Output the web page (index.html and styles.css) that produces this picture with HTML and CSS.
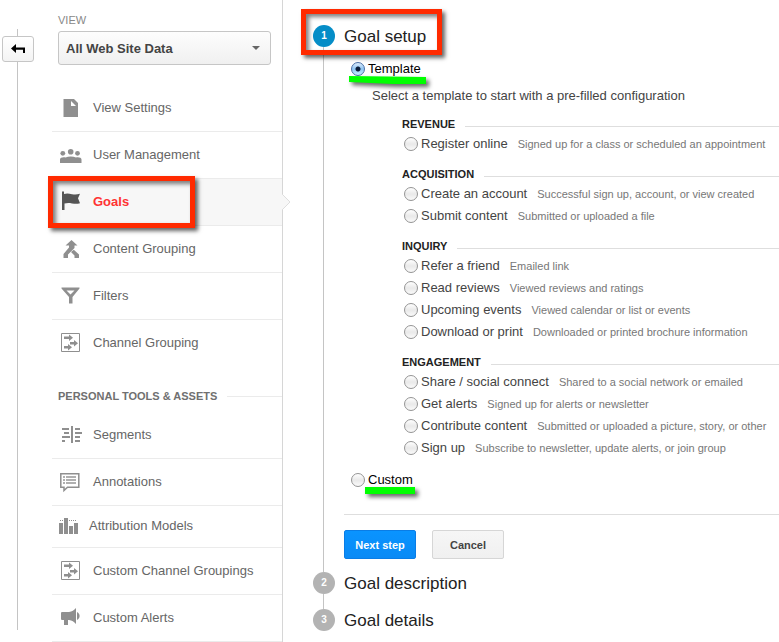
FILE: index.html
```html
<!DOCTYPE html>
<html lang="en">
<head>
  <meta charset="UTF-8">
  <title>Goal setup</title>
  <link rel="stylesheet" href="styles.css">
</head>
<body>
  <div class="page">
    <div class="rail">
      <span class="rail-line rail-top"></span>
      <button class="back" type="button" aria-label="Back">
        <svg width="16" height="12" viewBox="0 0 16 12"><path d="M1 5.500L6 1v3.500h9V10h-2V6.700H6V10z"/></svg>
      </button>
      <span class="rail-line"></span>
    </div>

    <nav class="nav">
      <label class="view-label" for="view">VIEW</label>
      <div class="view-box">
        <select id="view" class="view-select">
          <option>All Web Site Data</option>
        </select>
        <svg class="caret" width="8" height="4" viewBox="0 0 8 4"><path d="M0 0h8L4 4z"/></svg>
      </div>

      <ul class="menu">
        <li><a href="#">
          <svg class="icon" viewBox="0 0 24 24"><path d="M5.500 3H16l4 4v14H5.500z"/><path class="cut" d="M13 5v5h5z"/></svg>
          View Settings</a></li>
        <li><a href="#">
          <svg class="icon" viewBox="0 0 24 24"><circle cx="12.700" cy="8.800" r="2.800"/><circle cx="4.800" cy="10.300" r="2.400"/><circle cx="19.500" cy="10.300" r="2.400"/><path d="M2 20v-3.500c0-2 3-2.500 5.500-2 3-1.200 7.500-1.200 10.500 0 2.500-.5 5.500 0 5.500 2V20z"/></svg>
          User Management</a></li>
        <li class="active"><a href="#">
          <svg class="icon" viewBox="0 0 24 24"><path d="M4 1.500h2V4c3-1 5-.5 8 .2 3 .5 5 .4 8-.4l-2 4.500 2 5c-3 .8-5 .6-8 .1-3-.6-5-.6-7.500.2V20H4z"/></svg>
          Goals</a>
          <svg class="notch" width="9" height="16" viewBox="0 0 9 16"><path d="M0 0l8 8-8 8"/></svg>
          <span class="mark-box mark-goals"></span></li>
        <li><a href="#">
          <svg class="icon" viewBox="0 0 24 24"><path d="M13.500 3l6 5.500h-3V11l-6.500 6.500V21H5.500v-4L11 10.500v-2H7.500z"/><path d="M15.800 12.700l5.200 4.800V21h-4.500v-2.500L13 15z"/></svg>
          Content Grouping</a></li>
        <li><a href="#">
          <svg class="icon" viewBox="0 0 24 24"><path d="M3.500 3.500h18v1L14.500 13v6.500H11V13L3.500 4.500z"/><path class="cut" d="M8.500 6.500h8l-4 4z"/></svg>
          Filters</a></li>
        <li><a href="#">
          <svg class="icon" viewBox="0 0 24 24"><path class="line" d="M3.500 2.500h18v18h-18z"/><path d="M6 5.500h5V3.500l4 3.200-4 3.200V8H6zM12 11h4V9l4 3.200-4 3.200v-2h-4zM6 15h4v-2l4 3.200-4 3.200v-2H6z"/></svg>
          Channel Grouping</a></li>
      </ul>

      <h2 class="nav-heading">PERSONAL TOOLS &amp; ASSETS</h2>

      <ul class="menu tools">
        <li><a href="#">
          <svg class="icon" viewBox="0 0 24 24"><path d="M13 3h2v17h-2zM4 5h7v2H4zM6 9h5v2H6zM4 13h8v2H4zM4 17h3v2H4zM17 5h5v2h-5zM17 9h7v2h-7zM17 13h5v2h-5zM17 17h5v2h-5z"/></svg>
          Segments</a></li>
        <li><a href="#">
          <svg class="icon" viewBox="0 0 24 24"><path class="line bold" d="M2.800 3.800h18v13.500H9.500L6 20.500v-3.200H2.800z"/><path class="light" d="M5 6h2v2H5zM8 6h10v2H8zM5 9h2v2H5zM8 9h10v2H8zM5 12h2v2H5zM8 12h10v2H8z"/></svg>
          Annotations</a></li>
        <li class="short"><a href="#">
          <svg class="icon" viewBox="0 0 24 24"><path d="M1 8h4v11H1zM6 3h4v16H6zM11 11h4v8h-4zM16 8h4v11h-4z"/><path d="M2 5h1v1H2zM4 5h1v1H4zM11 5h1v1h-1zM13 5h1v1h-1zM15 5h1v1h-1zM17 5h1v1h-1z"/></svg>
          Attribution Models</a></li>
        <li><a href="#">
          <svg class="icon" viewBox="0 0 24 24"><path class="line" d="M3.500 2.500h18v18h-18z"/><path d="M6 5.500h5V3.500l4 3.200-4 3.200V8H6zM12 11h4V9l4 3.200-4 3.200v-2h-4zM6 15h4v-2l4 3.200-4 3.200v-2H6z"/></svg>
          Custom Channel Groupings</a></li>
        <li><a href="#">
          <svg class="icon" viewBox="0 0 24 24"><path d="M4 6h7c3-.3 5-1.600 7-4v16c-2-2.400-4-3.700-7-4h-1v5H6v-5H4c-1 0-1-1-1-1V7s0-1 1-1zM19 6c3.500 1.500 3.500 6.500 0 8z"/></svg>
          Custom Alerts</a></li>
      </ul>
    </nav>

    <main class="main">
      <section class="step current">
        <div class="marker"><span class="num">1</span></div>
        <form class="step-body">
          <h1 class="title">Goal setup<span class="mark-box mark-setup"></span></h1>

          <div class="choice choice-first">
            <input type="radio" name="type" id="template" checked>
            <label for="template">Template</label>
            <svg class="mark-line mark-template" width="84" height="16" viewBox="0 0 84 16"><path d="M0 0l77 1v7H44L0 6z"/></svg>
          </div>
          <p class="hint">Select a template to start with a pre-filled configuration</p>

          <div class="groups">
            <div class="group">
              <h3>REVENUE</h3>
              <div class="row"><input type="radio" name="goal" id="g1"><label for="g1">Register online</label><span>Signed up for a class or scheduled an appointment</span></div>
            </div>
            <div class="group">
              <h3>ACQUISITION</h3>
              <div class="row"><input type="radio" name="goal" id="g2"><label for="g2">Create an account</label><span>Successful sign up, account, or view created</span></div>
              <div class="row"><input type="radio" name="goal" id="g3"><label for="g3">Submit content</label><span>Submitted or uploaded a file</span></div>
            </div>
            <div class="group">
              <h3>INQUIRY</h3>
              <div class="row"><input type="radio" name="goal" id="g4"><label for="g4">Refer a friend</label><span>Emailed link</span></div>
              <div class="row"><input type="radio" name="goal" id="g5"><label for="g5">Read reviews</label><span>Viewed reviews and ratings</span></div>
              <div class="row"><input type="radio" name="goal" id="g6"><label for="g6">Upcoming events</label><span>Viewed calendar or list or events</span></div>
              <div class="row"><input type="radio" name="goal" id="g7"><label for="g7">Download or print</label><span>Downloaded or printed brochure information</span></div>
            </div>
            <div class="group">
              <h3>ENGAGEMENT</h3>
              <div class="row"><input type="radio" name="goal" id="g8"><label for="g8">Share / social connect</label><span>Shared to a social network or emailed</span></div>
              <div class="row"><input type="radio" name="goal" id="g9"><label for="g9">Get alerts</label><span>Signed up for alerts or newsletter</span></div>
              <div class="row"><input type="radio" name="goal" id="g10"><label for="g10">Contribute content</label><span>Submitted or uploaded a picture, story, or other</span></div>
              <div class="row"><input type="radio" name="goal" id="g11"><label for="g11">Sign up</label><span>Subscribe to newsletter, update alerts, or join group</span></div>
            </div>
          </div>

          <div class="choice">
            <input type="radio" name="type" id="custom">
            <label for="custom">Custom</label>
            <svg class="mark-line mark-custom" width="58" height="14" viewBox="0 0 58 14"><path d="M1 1h50v7H1z"/></svg>
          </div>

          <div class="buttons">
            <button class="btn primary" type="button">Next step</button>
            <button class="btn" type="button">Cancel</button>
          </div>
        </form>
      </section>

      <section class="step">
        <div class="marker"><span class="num">2</span></div>
        <h1 class="title">Goal description</h1>
      </section>
      <section class="step last">
        <div class="marker"><span class="num">3</span></div>
        <h1 class="title">Goal details</h1>
      </section>
    </main>
  </div>
</body>
</html>
```

FILE: styles.css
```css
body{
  margin: 0;
  background-color: #fff;
  font-family: "Liberation Sans", Arial, sans-serif;
  font-size: 13px;
  color: #444;
}
h1, h2, h3, p, ul{
  margin: 0;
  padding: 0;
}
.page{
  display: flex;
  min-height: 100vh;
  overflow: hidden;
}

/* left rail with the back button */
.rail{
  display: flex;
  flex-direction: column;
  width: 34px;
  margin-right: 18px;
  padding: 29px 0 12px 2px;
  box-sizing: border-box;
}
.rail-line{
  flex: 1;
  width: 1px;
  margin-left: 15px;
  background-color: #c4c4c4;
}
.rail-top{
  flex: none;
  height: 7px;
}
.back{
  display: flex;
  align-items: center;
  justify-content: center;
  width: 32px;
  height: 26px;
  padding: 0;
  border: 1px solid #c6c6c6;
  border-radius: 3px;
  background: linear-gradient(#fff, #f3f3f3);
}

/* navigation */
.nav{
  flex: none;
  width: 230px;
  padding-top: 12px;
  border-right: 1px solid #d6d6d6;
}
.view-label{
  display: block;
  padding-left: 6px;
  font-size: 11px;
  line-height: 16px;
  color: #888;
}
.view-box{
  position: relative;
  margin: 3px 11px 20px 6px;
}
.view-select{
  display: block;
  width: 100%;
  height: 34px;
  padding: 0 7px;
  border: 1px solid #c6c6c6;
  border-radius: 3px;
  background: linear-gradient(#fdfdfd, #f0f0f0);
  appearance: none;
  font-family: inherit;
  font-size: 13px;
  font-weight: bold;
  color: #444;
}
.caret{
  position: absolute;
  right: 11px;
  top: 15px;
  fill: #666;
}
.menu{
  list-style: none;
}
.menu li{
  position: relative;
  border-bottom: 1px solid #ebebeb;
}
.menu a{
  display: flex;
  align-items: center;
  gap: 11px;
  box-sizing: border-box;
  height: 46px;
  padding: 0 0 2px 6px;
  color: #666;
  text-decoration: none;
}
.menu:not(.tools) li:last-child{
  border-bottom: none;
}
.menu .short a{
  gap: 7px;
  height: 41px;
}
.menu .active{
  background-color: #f7f7f7;
}
.menu .active a{
  font-weight: bold;
  color: #f33;
}
.icon{
  flex: none;
  width: 24px;
  height: 24px;
  margin-top: 2px;
  fill: #8f8f8f;
}
.active .icon{
  fill: #555;
}
.icon .cut{
  fill: #fff;
}
.icon .light{
  fill: #b0b0b0;
}
.icon .line{
  fill: none;
  stroke: #8f8f8f;
}
.icon .bold{
  stroke-width: 1.5;
}
.notch{
  position: absolute;
  right: -9px;
  top: 15px;
  fill: #f7f7f7;
  stroke: #dedede;
}
.nav-heading{
  display: flex;
  align-items: center;
  gap: 10px;
  margin: 22px 0 8px;
  padding-left: 6px;
  font-size: 11px;
  line-height: 16px;
  color: #707070;
}
.nav-heading::after{
  content: "";
  flex: 1;
  height: 1px;
  background-color: #ebebeb;
}

/* goal steps */
.main{
  flex: 1;
  min-width: 0;
  padding: 25px 0 9px 30px;
}
.step{
  display: flex;
  gap: 9px;
  min-height: 37px;
}
.step.last{
  min-height: 22px;
}
.marker{
  display: flex;
  flex-direction: column;
  flex: none;
  width: 22px;
}
.marker::after{
  content: "";
  flex: 1;
  width: 1px;
  margin-left: 10px;
  background-color: #c4c4c4;
}
.last .marker::after{
  display: none;
}
.num{
  width: 22px;
  border-radius: 50%;
  background-color: #b3b3b3;
  color: #fff;
  font-size: 10px;
  font-weight: bold;
  line-height: 22px;
  text-align: center;
}
.current .num{
  background-color: #058dc7;
}
.step-body{
  flex: 1;
  min-width: 0;
  padding-bottom: 13px;
}
.title{
  position: relative;
  font-size: 17px;
  font-weight: normal;
  line-height: 24px;
  color: #222;
}
.choice{
  position: relative;
  display: flex;
  align-items: center;
  gap: 3px;
  height: 22px;
  padding-left: 7px;
  color: #000;
}
.choice-first{
  margin-top: 9px;
}
.choice label, .row label{
  padding-bottom: 2px;
}
input[type="radio"]{
  appearance: none;
  flex: none;
  width: 14px;
  height: 14px;
  margin: 0;
  border: 1px solid #949494;
  border-radius: 50%;
  background: linear-gradient(#fff, #e9e9e9 50%, #fafafa);
}
input[type="radio"]:checked{
  border-color: #4a6fa5;
  background: radial-gradient(circle, #0a1c38 2px, transparent 3px), linear-gradient(#dcecfc, #8fc4f2 50%, #c5f0ff);
}
.hint{
  margin-top: 5px;
  padding-left: 28px;
  line-height: 22px;
}
.groups{
  display: flex;
  flex-direction: column;
  gap: 10px;
  margin: 8px 0 10px;
  padding-left: 58px;
}
.group h3{
  display: flex;
  align-items: center;
  gap: 10px;
  font-size: 11px;
  line-height: 18px;
  color: #222;
}
.group h3::after{
  content: "";
  flex: 1;
  height: 1px;
  margin-top: 4px;
  background-color: #dedede;
}
.row{
  display: flex;
  align-items: center;
  gap: 3px;
  height: 22px;
  padding-left: 2px;
  white-space: nowrap;
}
.row span{
  margin-left: 7px;
  font-size: 11px;
  color: #777;
}
.buttons{
  display: flex;
  gap: 16px;
  margin-top: 23px;
  padding-top: 15px;
  border-top: 1px solid #dedede;
}
.btn{
  width: 72px;
  height: 29px;
  padding: 0;
  border: 1px solid #d6d6d6;
  border-radius: 2px;
  background: linear-gradient(#f6f6f6, #f0f0f0);
  font-family: inherit;
  font-size: 11px;
  font-weight: bold;
  color: #444;
}
.btn.primary{
  border-color: #0a7de6;
  background: linear-gradient(#0a94ff, #0a8af5);
  color: #fff;
}

/* red and green highlights */
.mark-box{
  position: absolute;
  box-sizing: border-box;
  border: 5px solid #ff2a00;
  box-shadow: 3px 3px 4px rgba(0, 0, 0, .6), inset 3px 3px 4px rgba(0, 0, 0, .5);
  pointer-events: none;
}
.mark-goals{
  left: -4px;
  top: -3px;
  width: 147px;
  height: 52px;
}
.mark-setup{
  left: -43px;
  top: -16px;
  width: 141px;
  height: 46px;
}
.mark-line{
  position: absolute;
  overflow: visible;
  fill: #0f0;
  filter: drop-shadow(3px 3px 2px rgba(0, 0, 0, .6));
}
.mark-template{
  left: 5px;
  top: 18px;
}
.mark-custom{
  left: 20px;
  top: 17px;
}
```
